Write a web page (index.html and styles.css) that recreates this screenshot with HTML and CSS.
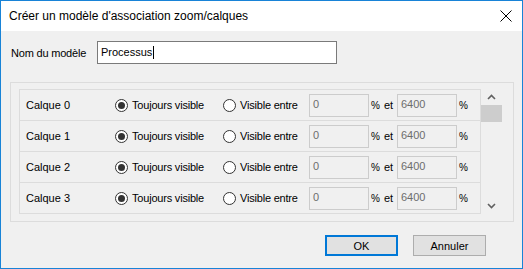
FILE: index.html
```html
<!doctype html>
<html lang="fr">
	<head>
		<meta charset="UTF-8" />
		<title>Créer un modèle d'association zoom/calques</title>
		<link rel="stylesheet" href="styles.css">
	</head>
	<body>
		<section class="window">
			<header class="titlebar">
				<span class="title">Créer un modèle d'association zoom/calques</span>
				<svg class="close" width="12" height="12" viewBox="0 0 12 12">
					<path d="M0.5 0.5 L11.5 11.5 M11.5 0.5 L0.5 11.5" stroke="#000" stroke-width="1" fill="none"/>
				</svg>
			</header>
			<div class="content">
				<div class="name-row">
					<label class="name-label">Nom du modèle</label>
					<div class="name-input">Processus<span class="caret"></span></div>
				</div>
				<div class="group">
					<div class="list">
						<div class="row">
							<span class="layer">Calque 0</span>
							<span class="opt opt-always"><i class="radio checked"></i>Toujours visible</span>
							<span class="opt opt-between"><i class="radio"></i>Visible entre</span>
							<span class="field">0</span>
							<span class="pct">%</span>
							<span class="et">et</span>
							<span class="field">6400</span>
							<span class="pct">%</span>
						</div>
						<div class="row">
							<span class="layer">Calque 1</span>
							<span class="opt opt-always"><i class="radio checked"></i>Toujours visible</span>
							<span class="opt opt-between"><i class="radio"></i>Visible entre</span>
							<span class="field">0</span>
							<span class="pct">%</span>
							<span class="et">et</span>
							<span class="field">6400</span>
							<span class="pct">%</span>
						</div>
						<div class="row">
							<span class="layer">Calque 2</span>
							<span class="opt opt-always"><i class="radio checked"></i>Toujours visible</span>
							<span class="opt opt-between"><i class="radio"></i>Visible entre</span>
							<span class="field">0</span>
							<span class="pct">%</span>
							<span class="et">et</span>
							<span class="field">6400</span>
							<span class="pct">%</span>
						</div>
						<div class="row">
							<span class="layer">Calque 3</span>
							<span class="opt opt-always"><i class="radio checked"></i>Toujours visible</span>
							<span class="opt opt-between"><i class="radio"></i>Visible entre</span>
							<span class="field">0</span>
							<span class="pct">%</span>
							<span class="et">et</span>
							<span class="field">6400</span>
							<span class="pct">%</span>
						</div>
					</div>
					<div class="scrollbar">
						<div class="arrow">
							<svg width="9" height="6" viewBox="0 0 9 6"><path d="M1 5 L4.5 1.5 L8 5" stroke="#606060" stroke-width="1.6" fill="none"/></svg>
						</div>
						<div class="thumb"></div>
						<div class="track"></div>
						<div class="arrow">
							<svg width="9" height="6" viewBox="0 0 9 6"><path d="M1 1 L4.5 4.5 L8 1" stroke="#606060" stroke-width="1.6" fill="none"/></svg>
						</div>
					</div>
				</div>
				<div class="buttons">
					<button class="btn btn-default">OK</button>
					<button class="btn">Annuler</button>
				</div>
			</div>
		</section>
	</body>
</html>
```

FILE: styles.css
```css
*{
	margin: 0;
	padding: 0;
	box-sizing: border-box;
}
body{
	width: 523px;
	height: 269px;
	overflow: hidden;
	background: #fff;
}
.window{
	width: 523px;
	height: 269px;
	border: 1px solid #1883d7;
	background: #f0f0f0;
	font-family: "Liberation Sans", Arial, sans-serif;
	font-size: 11px;
	color: #000;
	display: flex;
	flex-direction: column;
}
.titlebar{
	height: 30px;
	background: #fff;
	display: flex;
	align-items: center;
	justify-content: space-between;
	padding: 0 10px 0 8px;
}
.title{
	font-size: 12px;
}
.close{
	display: block;
}
.content{
	flex: 1;
	padding: 10px 0 0 9px;
}
.name-row{
	display: flex;
	align-items: center;
	height: 23px;
}
.name-label{
	width: 87px;
	padding-left: 1px;
	letter-spacing: -0.2px;
}
.name-input{
	width: 240px;
	height: 23px;
	background: #fff;
	border: 1px solid #7a7a7a;
	padding: 0 0 0 3px;
	line-height: 21px;
	display: flex;
	align-items: center;
}
.caret{
	display: inline-block;
	width: 1px;
	height: 13px;
	background: #000;
	margin-left: 1px;
}
.group{
	margin-top: 18px;
	width: 504px;
	height: 140px;
	border: 1px solid #dcdcdc;
	padding: 6px 11px 7px 8px;
	display: flex;
}
.list{
	width: 462px;
	height: 125px;
	border: 1px solid #dcdcdc;
}
.row{
	height: 31px;
	border-bottom: 1px solid #dcdcdc;
	display: flex;
	align-items: center;
	padding-left: 6px;
}
.row:last-child{
	border-bottom: none;
	height: 30px;
}
.layer{
	width: 89px;
}
.opt{
	display: flex;
	align-items: center;
	letter-spacing: -0.2px;
}
.opt-always{
	width: 108px;
}
.opt-between{
	width: 86px;
}
.radio{
	width: 13px;
	height: 13px;
	border: 1px solid #333;
	border-radius: 50%;
	background: #fff;
	margin-right: 4px;
	display: flex;
	align-items: center;
	justify-content: center;
}
.radio.checked::after{
	content: "";
	width: 7px;
	height: 7px;
	border-radius: 50%;
	background: #333;
}
.field{
	width: 60px;
	height: 23px;
	border: 1px solid #cccccc;
	background: #f0f0f0;
	color: #6d6d6d;
	padding-left: 3px;
	line-height: 19px;
}
.pct{
	width: 15px;
	padding-left: 2px;
	font-size: 10px;
}
.et{
	width: 13px;
}
.scrollbar{
	width: 21px;
	display: flex;
	flex-direction: column;
}
.arrow{
	height: 16px;
	display: flex;
	align-items: center;
	justify-content: center;
}
.thumb{
	height: 17px;
	background: #cdcdcd;
}
.track{
	flex: 1;
}
.buttons{
	margin-top: 13px;
	display: flex;
	justify-content: flex-end;
	gap: 15px;
	padding-right: 36px;
}
.btn{
	width: 73px;
	height: 21px;
	background: #e1e1e1;
	border: 1px solid #adadad;
	font-family: "Liberation Sans", Arial, sans-serif;
	font-size: 11px;
	color: #000;
}
.btn-default{
	border: 2px solid #0078d7;
}
```
